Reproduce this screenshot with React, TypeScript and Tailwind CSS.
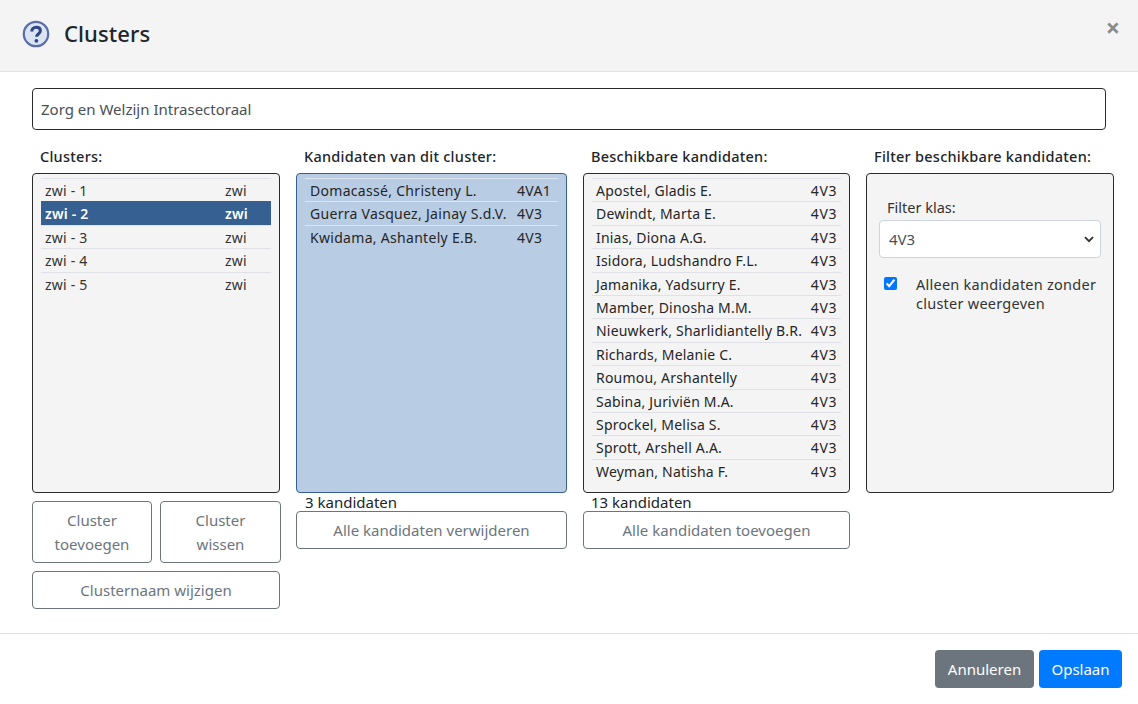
import React from "react";

const clusters = ["zwi - 1", "zwi - 2", "zwi - 3", "zwi - 4", "zwi - 5"];

const members = [
  { name: "Domacassé, Christeny L.", klas: "4VA1" },
  { name: "Guerra Vasquez, Jainay S.d.V.", klas: "4V3" },
  { name: "Kwidama, Ashantely E.B.", klas: "4V3" },
];

const available = [
  "Apostel, Gladis E.",
  "Dewindt, Marta E.",
  "Inias, Diona A.G.",
  "Isidora, Ludshandro F.L.",
  "Jamanika, Yadsurry E.",
  "Mamber, Dinosha M.M.",
  "Nieuwkerk, Sharlidiantelly B.R.",
  "Richards, Melanie C.",
  "Roumou, Arshantelly",
  "Sabina, Juriviën M.A.",
  "Sprockel, Melisa S.",
  "Sprott, Arshell A.A.",
  "Weyman, Natisha F.",
];

const OutlineButton = ({ children, className }: { children: React.ReactNode; className: string }) => (
  <button className={"rounded border border-[#6c757d] bg-white text-[15px] leading-[24px] text-[#6c757d] text-center " + className}>
    {children}
  </button>
);

const Heading = ({ children }: { children: React.ReactNode }) => (
  <div className="h-[43px] pt-[15px] pl-2 text-[14.5px] leading-[22px] tracking-[0.25px] font-medium text-[#212529] whitespace-nowrap">
    {children}
  </div>
);

export default function App() {
  return (
    <div className="w-[1138px] h-[704px] overflow-hidden bg-white text-[#212529] font-['Noto_Sans','Open_Sans',sans-serif]">
      <div className="h-[72px] flex items-start justify-between pl-[22px] pr-[18px] bg-[#f4f4f4] border-b border-[#dee2e6]">
        <div className="mt-[20px] flex items-center gap-[14px]">
          <svg width="28" height="28" viewBox="0 0 28 28">
            <circle cx="14" cy="14" r="12.2" fill="#dbe4f3" stroke="#5a6ea8" strokeWidth="2.2" />
            <path d="M9.8 11.4c0-2.6 1.9-4.2 4.4-4.2s4.2 1.4 4.2 3.6c0 3.2-3.9 3.2-3.9 6" fill="none" stroke="#2f4585" strokeWidth="3" />
            <circle cx="14.4" cy="20.8" r="1.9" fill="#2f4585" />
          </svg>
          <h5 className="-mt-[2px] text-[22px] leading-[30px] font-medium tracking-[0.1px]">Clusters</h5>
        </div>
        <span className="mt-[13px] text-[25px] leading-[28px] font-bold text-[#8a8a8a]">×</span>
      </div>

      <div className="h-[562px] pt-4 pl-8 pr-6 border-b border-[#e2e4e6]">
        <div className="w-[1074px] h-[42px] px-2 flex items-center rounded border border-[#2b2b2b] text-[15px] text-[#495057]">
          Zorg en Welzijn Intrasectoraal
        </div>

        <div className="grid grid-cols-[248px_271px_267px_248px] gap-x-4">
          <div>
            <Heading>Clusters:</Heading>
            <div className="h-[320px] rounded border border-[#2b2b2b] bg-[#f4f4f4] pt-1 px-2">
              {clusters.map((c, i) => (
                <div
                  key={c}
                  className={
                    "h-[23.4px] flex justify-between pl-1 pr-[3px] border-t text-[14px] leading-[23px] tracking-[0.2px] " +
                    (i === 1
                      ? "bg-[#366092] border-[#366092] text-white font-semibold"
                      : "border-[#e0e1e6] text-[#333]")
                  }
                >
                  <span>{c}</span>
                  <span className="w-[43px]">zwi</span>
                </div>
              ))}
            </div>
            <div className="mt-2 flex gap-2 w-[249px]">
              <OutlineButton className="w-[120px] h-[62px]">
                Cluster
                <br />
                toevoegen
              </OutlineButton>
              <OutlineButton className="w-[121px] h-[62px]">
                Cluster
                <br />
                wissen
              </OutlineButton>
            </div>
            <OutlineButton className="mt-2 w-[248px] h-[38px]">Clusternaam wijzigen</OutlineButton>
          </div>

          <div>
            <Heading>Kandidaten van dit cluster:</Heading>
            <div className="h-[320px] rounded border border-[#366092] bg-[#b8cce4] pt-1 px-2">
              {members.map((m) => (
                <div key={m.name} className="h-[23.4px] flex border-t border-[#dce6f1] pl-[5px] text-[14px] leading-[23px] tracking-[0.3px] text-[#262626]">
                  <span className="w-[207px] whitespace-nowrap">{m.name}</span>
                  <span>{m.klas}</span>
                </div>
              ))}
            </div>
            <div className="h-[18px] pl-[9px] text-[15px] leading-[19px]">3 kandidaten</div>
            <OutlineButton className="w-full h-[38px]">Alle kandidaten verwijderen</OutlineButton>
          </div>

          <div>
            <Heading>Beschikbare kandidaten:</Heading>
            <div className="h-[320px] rounded border border-[#2b2b2b] bg-[#f4f4f4] pt-1 px-2">
              {available.map((name) => (
                <div key={name} className="h-[23.4px] flex justify-between border-t border-[#e0e1e6] pl-1 pr-[4px] text-[14px] leading-[23px] tracking-[0.2px] text-[#262626]">
                  <span className="whitespace-nowrap">{name}</span>
                  <span className="tracking-[0.6px]">4V3</span>
                </div>
              ))}
            </div>
            <div className="h-[18px] pl-2 text-[15px] leading-[19px]">13 kandidaten</div>
            <OutlineButton className="w-full h-[38px]">Alle kandidaten toevoegen</OutlineButton>
          </div>

          <div>
            <Heading>Filter beschikbare kandidaten:</Heading>
            <div className="h-[320px] rounded border border-[#2b2b2b] bg-[#f4f4f4] pt-[22px] px-3">
              <div className="pl-2 text-[14.5px] leading-[22px] text-[#333]">Filter klas:</div>
              <div className="mt-[2px] h-[38px] flex items-center justify-between pl-[9px] pr-[6px] rounded border border-[#ced4da] bg-white text-[15px] text-[#495057]">
                <span>4V3</span>
                <svg width="10" height="7" viewBox="0 0 10 7">
                  <path d="M1 1.2l4 4 4-4" fill="none" stroke="#333" strokeWidth="1.9" />
                </svg>
              </div>
              <div className="mt-[17px] flex items-start">
                <input type="checkbox" defaultChecked className="ml-[5px] mt-[2px] w-[13px] h-[13px] accent-[#0075ff]" />
                <div className="ml-[19px] w-[190px] text-[14.5px] leading-[19px] tracking-[0.25px] text-[#333]">
                  Alleen kandidaten zonder cluster weergeven
                </div>
              </div>
            </div>
          </div>
        </div>
      </div>

      <div className="h-[70px] flex justify-end items-start gap-[5px] pt-4 pr-4">
        <button className="w-[99px] h-[38px] rounded bg-[#6c757d] text-[15px] text-white">Annuleren</button>
        <button className="w-[83px] h-[38px] rounded bg-[#007bff] text-[15px] text-white">Opslaan</button>
      </div>
    </div>
  );
}
